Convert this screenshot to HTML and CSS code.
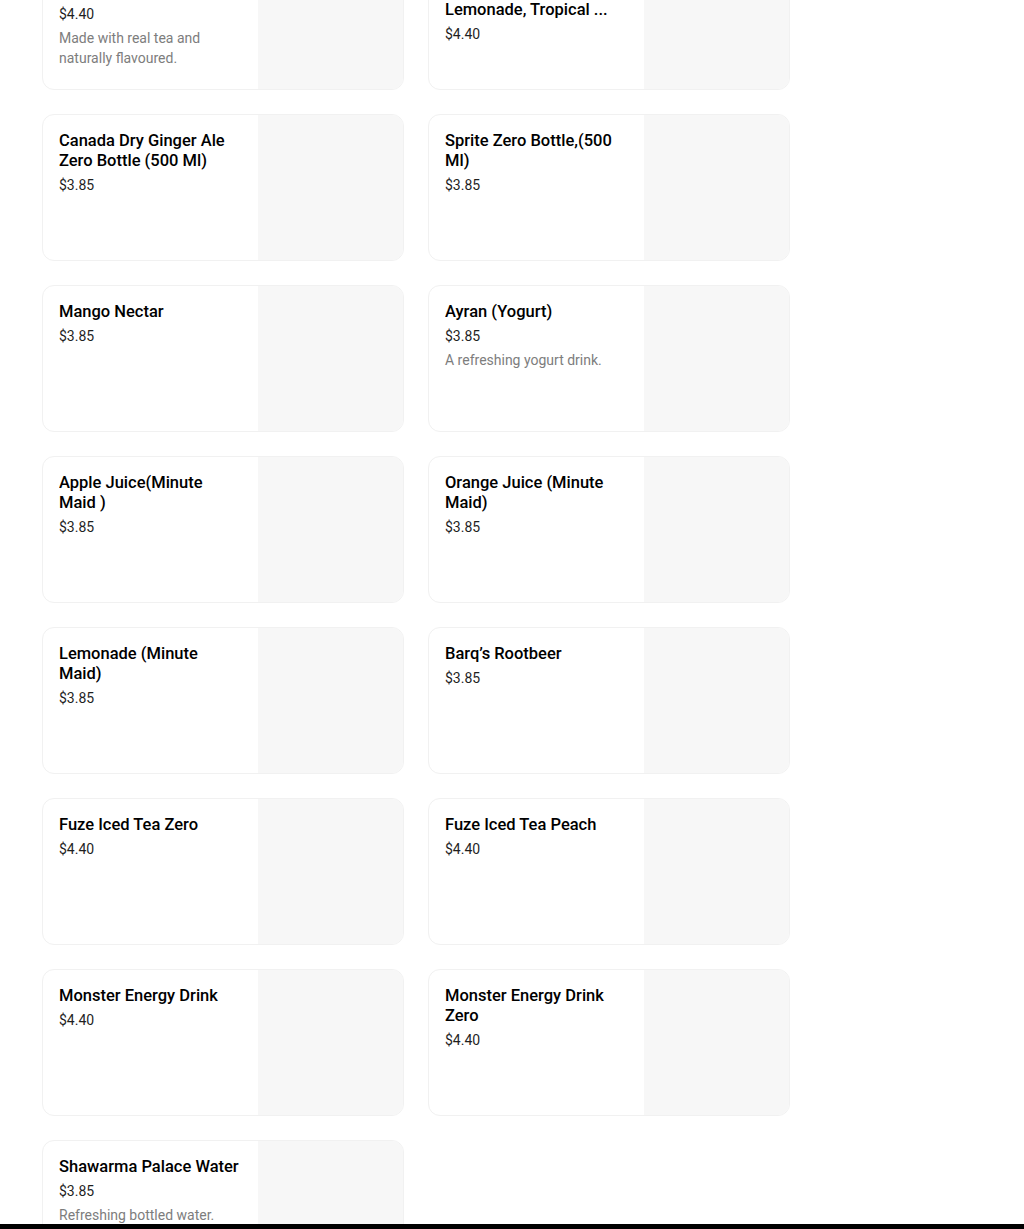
FILE: index.html
```html
<!DOCTYPE html>
<html lang="en">
<head>
<meta charset="utf-8">
<title>Drinks</title>
<link rel="stylesheet" href="styles.css">
</head>
<body>
<main class="menu">
  <ul class="grid">
    <li class="card"><div class="info"><h3 class="name">Fuze Iced Tea Lemon (500 Ml)</h3><p class="price">$4.40</p><p class="desc">Made with real tea and naturally flavoured.</p></div><div class="thumb"></div></li>
    <li class="card"><div class="info"><h3 class="name">Minute Maid Variety<br>(Pink Lemonade, Mango<br>Lemonade, Tropical ...</h3><p class="price">$4.40</p></div><div class="thumb"></div></li>
    <li class="card"><div class="info"><h3 class="name">Canada Dry Ginger Ale Zero Bottle (500 Ml)</h3><p class="price">$3.85</p></div><div class="thumb"></div></li>
    <li class="card"><div class="info"><h3 class="name">Sprite Zero Bottle,(500 Ml)</h3><p class="price">$3.85</p></div><div class="thumb"></div></li>
    <li class="card"><div class="info"><h3 class="name">Mango Nectar</h3><p class="price">$3.85</p></div><div class="thumb"></div></li>
    <li class="card"><div class="info"><h3 class="name">Ayran (Yogurt)</h3><p class="price">$3.85</p><p class="desc">A refreshing yogurt drink.</p></div><div class="thumb"></div></li>
    <li class="card"><div class="info"><h3 class="name">Apple Juice(Minute Maid )</h3><p class="price">$3.85</p></div><div class="thumb"></div></li>
    <li class="card"><div class="info"><h3 class="name">Orange Juice (Minute Maid)</h3><p class="price">$3.85</p></div><div class="thumb"></div></li>
    <li class="card"><div class="info"><h3 class="name">Lemonade (Minute Maid)</h3><p class="price">$3.85</p></div><div class="thumb"></div></li>
    <li class="card"><div class="info"><h3 class="name">Barq’s Rootbeer</h3><p class="price">$3.85</p></div><div class="thumb"></div></li>
    <li class="card"><div class="info"><h3 class="name">Fuze Iced Tea Zero</h3><p class="price">$4.40</p></div><div class="thumb"></div></li>
    <li class="card"><div class="info"><h3 class="name">Fuze Iced Tea Peach</h3><p class="price">$4.40</p></div><div class="thumb"></div></li>
    <li class="card"><div class="info"><h3 class="name">Monster Energy Drink</h3><p class="price">$4.40</p></div><div class="thumb"></div></li>
    <li class="card"><div class="info"><h3 class="name">Monster Energy Drink Zero</h3><p class="price">$4.40</p></div><div class="thumb"></div></li>
    <li class="card"><div class="info"><h3 class="name">Shawarma Palace Water</h3><p class="price">$3.85</p><p class="desc">Refreshing bottled water.</p></div><div class="thumb"></div></li>
  </ul>
</main>
<div class="bottom-bar"></div>
</body>
</html>
```
FILE: styles.css
```css
* { box-sizing: border-box; }
html, body { margin: 0; padding: 0; background: #fff; }
body {
  font-family: Roboto, "Liberation Sans", Arial, sans-serif;
  color: #000;
  overflow: hidden;
  height: 1229px;
}
.menu {
  padding-left: 42px;
  margin-top: -57px;
}
.grid {
  list-style: none;
  margin: 0;
  padding: 0;
  width: 748px;
  display: grid;
  grid-template-columns: 1fr 1fr;
  column-gap: 24px;
  row-gap: 24px;
}
.card {
  display: flex;
  height: 147px;
  border: 1px solid #f1f1f1;
  border-radius: 12px;
  overflow: hidden;
  background: #fff;
}
.info {
  flex: 1;
  min-width: 0;
  padding: 16px 15px 0 16px;
}
.thumb {
  width: 145px;
  flex: 0 0 145px;
  background: #f7f7f7;
}
.name {
  margin: 0;
  font-size: 16.5px;
  line-height: 20px;
  font-weight: 500;
  color: #000;
  display: -webkit-box;
  -webkit-line-clamp: 3;
  -webkit-box-orient: vertical;
  overflow: hidden;
}
.price {
  margin: 4px 0 0 0;
  font-size: 14px;
  line-height: 20px;
  color: #1f1f1f;
}
.desc {
  margin: 4px 0 0 0;
  font-size: 14px;
  line-height: 20px;
  color: #7d7d7d;
}
.bottom-bar {
  position: fixed;
  left: 0;
  right: 0;
  bottom: 0;
  height: 5px;
  background: #000;
}
```
